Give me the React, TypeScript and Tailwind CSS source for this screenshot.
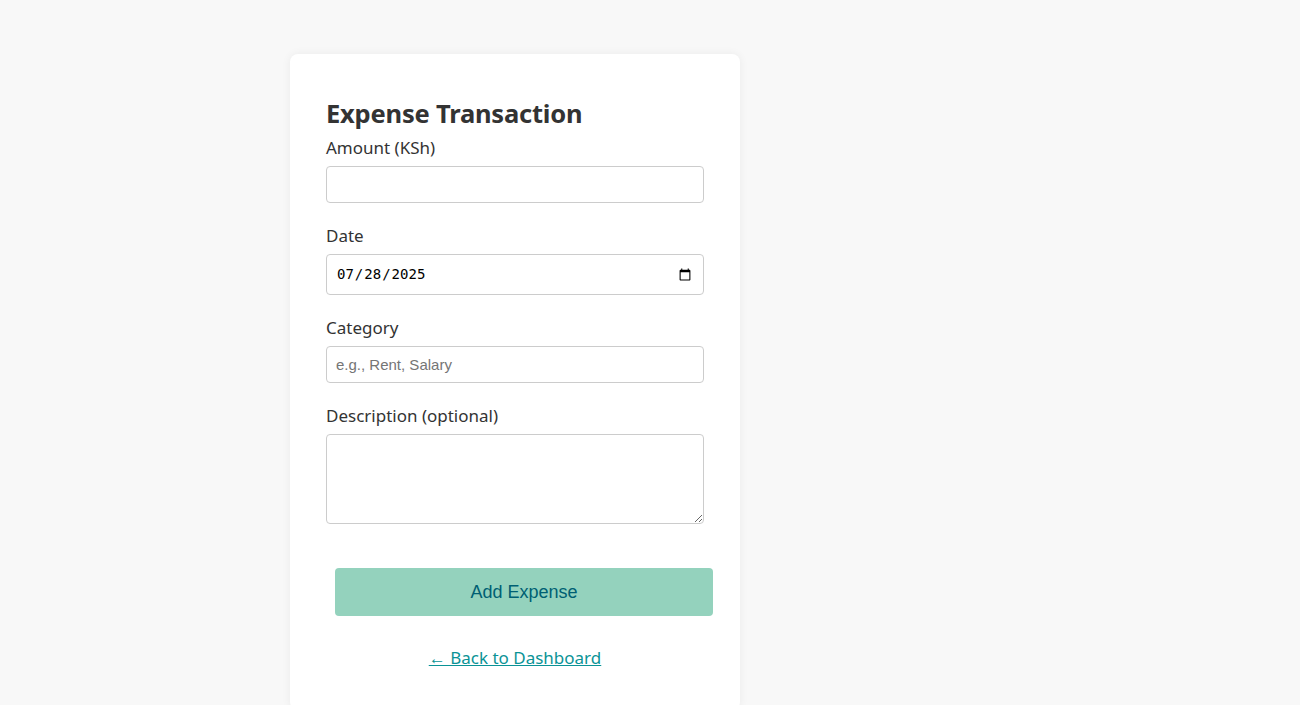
import React, { useState } from 'react';

const ExpenseForm = () => {
  const [amount, setAmount] = useState('');
  const [date, setDate] = useState('2025-07-28');
  const [category, setCategory] = useState('');
  const [description, setDescription] = useState('');

  const labelCls = 'block text-[17px] leading-6 text-[#333] mb-[6px]';
  const inputCls =
    'block w-full h-[37px] rounded-[4px] border border-[#ccc] bg-white px-[9px] text-[15px] text-[#333] outline-none';

  return (
    <div className="w-[450px] ml-[290px] mt-[54px] bg-white rounded-lg shadow-[0_0_10px_rgba(0,0,0,0.06)] px-9 pt-[43px] pb-10 text-[#333] font-['Noto_Sans',sans-serif]">
      <h2 className="text-[25.5px] leading-8 font-bold mb-[7px] tracking-[-0.2px]">Expense Transaction</h2>

      <form onSubmit={(e) => e.preventDefault()}>
        <label className={labelCls}>Amount (KSh)</label>
        <input
          type="number"
          value={amount}
          onChange={(e) => setAmount(e.target.value)}
          className={inputCls}
        />

        <label className={`${labelCls} mt-[21px]`}>Date</label>
        <input
          type="date"
          value={date}
          onChange={(e) => setDate(e.target.value)}
          className="block w-full h-[41px] rounded-[4px] border border-[#ccc] bg-white px-[9px] text-[14px] text-black font-['DejaVu_Sans_Mono',monospace] outline-none"
        />

        <label className={`${labelCls} mt-[21px]`}>Category</label>
        <input
          type="text"
          placeholder="e.g., Rent, Salary"
          value={category}
          onChange={(e) => setCategory(e.target.value)}
          className={`${inputCls} font-['Liberation_Sans',sans-serif] placeholder:text-[#757575]`}
        />

        <label className={`${labelCls} mt-[21px]`}>Description (optional)</label>
        <textarea
          value={description}
          onChange={(e) => setDescription(e.target.value)}
          className="block w-full h-[90px] rounded-[4px] border border-[#ccc] bg-white px-[9px] py-2 text-[15px] outline-none"
        />

        <button
          type="submit"
          className="block w-full h-12 mt-11 ml-[9px] rounded-[4px] bg-[#94d2bd] text-[#005f73] text-[18px] font-['Liberation_Sans',sans-serif]"
        >
          Add Expense
        </button>
      </form>

      <div className="mt-[30px] text-center">
        <a href="#" className="text-[17px] leading-6 text-[#0a9396] underline">
          ← Back to Dashboard
        </a>
      </div>
    </div>
  );
};

export default function App() {
  return (
    <div className="min-h-[705px] bg-[#f8f8f8] overflow-hidden">
      <ExpenseForm />
    </div>
  );
}
